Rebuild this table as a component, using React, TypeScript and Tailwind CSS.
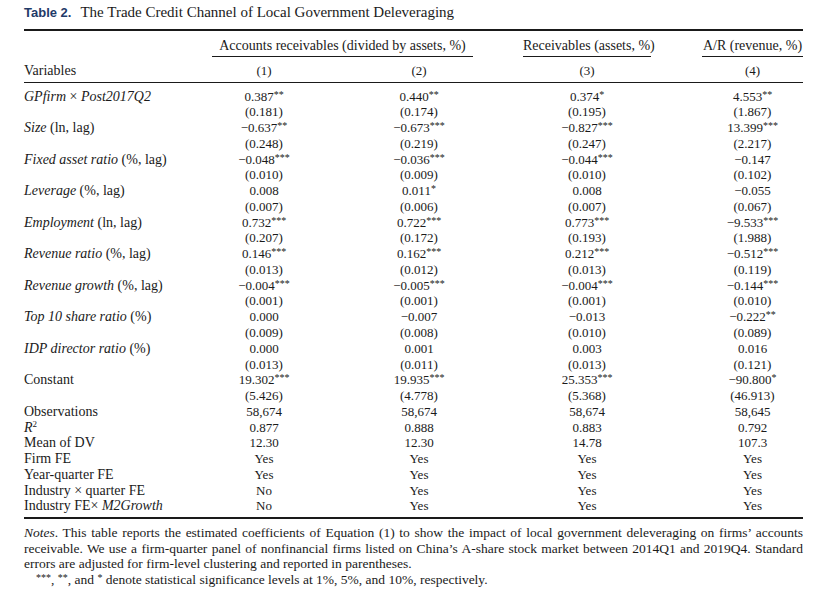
import React from 'react';

type Row = {
  label: React.ReactNode;
  coef: string[];
  se: string[];
};

const rows: Row[] = [
  {
    label: (
      <>
        <i>GPfirm</i> × <i>Post2017Q2</i>
      </>
    ),
    coef: ['0.387**', '0.440**', '0.374*', '4.553**'],
    se: ['(0.181)', '(0.174)', '(0.195)', '(1.867)'],
  },
  {
    label: (
      <>
        <i>Size</i> (ln, lag)
      </>
    ),
    coef: ['−0.637**', '−0.673***', '−0.827***', '13.399***'],
    se: ['(0.248)', '(0.219)', '(0.247)', '(2.217)'],
  },
  {
    label: (
      <>
        <i>Fixed asset ratio</i> (%, lag)
      </>
    ),
    coef: ['−0.048***', '−0.036***', '−0.044***', '−0.147'],
    se: ['(0.010)', '(0.009)', '(0.010)', '(0.102)'],
  },
  {
    label: (
      <>
        <i>Leverage</i> (%, lag)
      </>
    ),
    coef: ['0.008', '0.011*', '0.008', '−0.055'],
    se: ['(0.007)', '(0.006)', '(0.007)', '(0.067)'],
  },
  {
    label: (
      <>
        <i>Employment</i> (ln, lag)
      </>
    ),
    coef: ['0.732***', '0.722***', '0.773***', '−9.533***'],
    se: ['(0.207)', '(0.172)', '(0.193)', '(1.988)'],
  },
  {
    label: (
      <>
        <i>Revenue ratio</i> (%, lag)
      </>
    ),
    coef: ['0.146***', '0.162***', '0.212***', '−0.512***'],
    se: ['(0.013)', '(0.012)', '(0.013)', '(0.119)'],
  },
  {
    label: (
      <>
        <i>Revenue growth</i> (%, lag)
      </>
    ),
    coef: ['−0.004***', '−0.005***', '−0.004***', '−0.144***'],
    se: ['(0.001)', '(0.001)', '(0.001)', '(0.010)'],
  },
  {
    label: (
      <>
        <i>Top 10 share ratio</i> (%)
      </>
    ),
    coef: ['0.000', '−0.007', '−0.013', '−0.222**'],
    se: ['(0.009)', '(0.008)', '(0.010)', '(0.089)'],
  },
  {
    label: (
      <>
        <i>IDP director ratio</i> (%)
      </>
    ),
    coef: ['0.000', '0.001', '0.003', '0.016'],
    se: ['(0.013)', '(0.011)', '(0.013)', '(0.121)'],
  },
  {
    label: 'Constant',
    coef: ['19.302***', '19.935***', '25.353***', '−90.800*'],
    se: ['(5.426)', '(4.778)', '(5.368)', '(46.913)'],
  },
];

const stats: { label: React.ReactNode; vals: string[] }[] = [
  { label: 'Observations', vals: ['58,674', '58,674', '58,674', '58,645'] },
  {
    label: (
      <>
        <i>R</i>
        <sup className="text-[9px] leading-none">2</sup>
      </>
    ),
    vals: ['0.877', '0.888', '0.883', '0.792'],
  },
  { label: 'Mean of DV', vals: ['12.30', '12.30', '14.78', '107.3'] },
  { label: 'Firm FE', vals: ['Yes', 'Yes', 'Yes', 'Yes'] },
  { label: 'Year-quarter FE', vals: ['Yes', 'Yes', 'Yes', 'Yes'] },
  { label: 'Industry × quarter FE', vals: ['No', 'Yes', 'Yes', 'Yes'] },
  {
    label: (
      <>
        Industry FE× <i>M2Growth</i>
      </>
    ),
    vals: ['No', 'Yes', 'Yes', 'Yes'],
  },
];

function Stars({ s }: { s: string }) {
  return <span className="text-[10px] leading-none relative top-[-3px]">{s}</span>;
}

// splits "0.387**" into number + raised stars
function Num({ v }: { v: string }) {
  const m = v.match(/^([^*]*)(\**)$/);
  const base = m ? m[1] : v;
  const stars = m ? m[2] : '';
  return (
    <span>
      {base}
      {stars && <Stars s={stars} />}
    </span>
  );
}

const grid = 'grid grid-cols-[188px_104px_206px_130px_151px]';

function Line({ label, vals }: { label?: React.ReactNode; vals: string[] }) {
  return (
    <div className={`${grid} h-[15.77px] leading-[15.77px]`}>
      <div className="text-[14px] whitespace-nowrap">{label}</div>
      <div className="text-center text-[13px]">
        <Num v={vals[0]} />
      </div>
      <div className="text-center text-[13px] w-[104px] ml-[51px]">
        <Num v={vals[1]} />
      </div>
      <div className="text-center text-[13px]">
        <Num v={vals[2]} />
      </div>
      <div className="text-center text-[13px] pl-[50px]">
        <Num v={vals[3]} />
      </div>
    </div>
  );
}

export default function App() {
  return (
    <div
      className="min-h-screen bg-white text-[#1a1a1a] px-[24px] pt-[2px]"
      style={{ fontFamily: '"Liberation Serif", "Times New Roman", serif' }}
    >
      <div className="w-[779px]">
        <div className="flex items-baseline h-[20px] leading-[20px]">
          <span
            className="text-[13px] font-bold text-[#1f3a68]"
            style={{ fontFamily: '"Liberation Sans", Arial, sans-serif' }}
          >
            Table 2.
          </span>
          <span className="text-[15px] ml-[9px]">
            The Trade Credit Channel of Local Government Deleveraging
          </span>
        </div>

        <div className="mt-[7px] h-[1.5px] bg-[#1a1a1a]" />

        <div className={`${grid} pt-[7px] text-[14px] leading-[16px]`}>
          <div />
          <div className="col-span-2">
            <div className="w-[261px] text-center pb-[2px] border-b border-[#1a1a1a]">
              Accounts receivables (divided by assets, %)
            </div>
          </div>
          <div>
            <div className="mx-[1px] text-center pb-[2px] border-b border-[#1a1a1a] whitespace-nowrap">
              Receivables (assets, %)
            </div>
          </div>
          <div className="pl-[50px]">
            <div className="text-center pb-[2px] border-b border-[#1a1a1a] whitespace-nowrap">
              A/R (revenue, %)
            </div>
          </div>
        </div>

        <div className={`${grid} pt-[6px] pb-[3px] leading-[16px]`}>
          <div className="text-[14px]">Variables</div>
          <div className="text-center text-[13px]">(1)</div>
          <div className="text-center text-[13px] w-[104px] ml-[51px]">(2)</div>
          <div className="text-center text-[13px]">(3)</div>
          <div className="text-center text-[13px] pl-[50px]">(4)</div>
        </div>

        <div className="h-[1.5px] bg-[#1a1a1a]" />

        <div className="pt-[5.5px] pb-[3px]">
          {rows.map((r, i) => (
            <React.Fragment key={i}>
              <Line label={r.label} vals={r.coef} />
              <Line vals={r.se} />
            </React.Fragment>
          ))}
          {stats.map((s, i) => (
            <Line key={i} label={s.label} vals={s.vals} />
          ))}
        </div>

        <div className="h-[2px] bg-[#1a1a1a]" />

        <div className="pt-[6px] text-[13.5px] leading-[15.6px]">
          <div className="text-justify [text-align-last:justify]">
            <i>Notes</i>. This table reports the estimated coefficients of Equation (1) to show the impact of
            local government deleveraging on firms’ accounts
          </div>
          <div className="text-justify [text-align-last:justify]">
            receivable. We use a firm-quarter panel of nonfinancial firms listed on China’s A-share stock
            market between 2014Q1 and 2019Q4. Standard
          </div>
          <div>errors are adjusted for firm-level clustering and reported in parentheses.</div>
          <div className="pl-[12px]">
            <Stars s="***" />, <Stars s="**" />, and <Stars s="*" /> denote statistical significance levels
            at 1%, 5%, and 10%, respectively.
          </div>
        </div>
      </div>
    </div>
  );
}
